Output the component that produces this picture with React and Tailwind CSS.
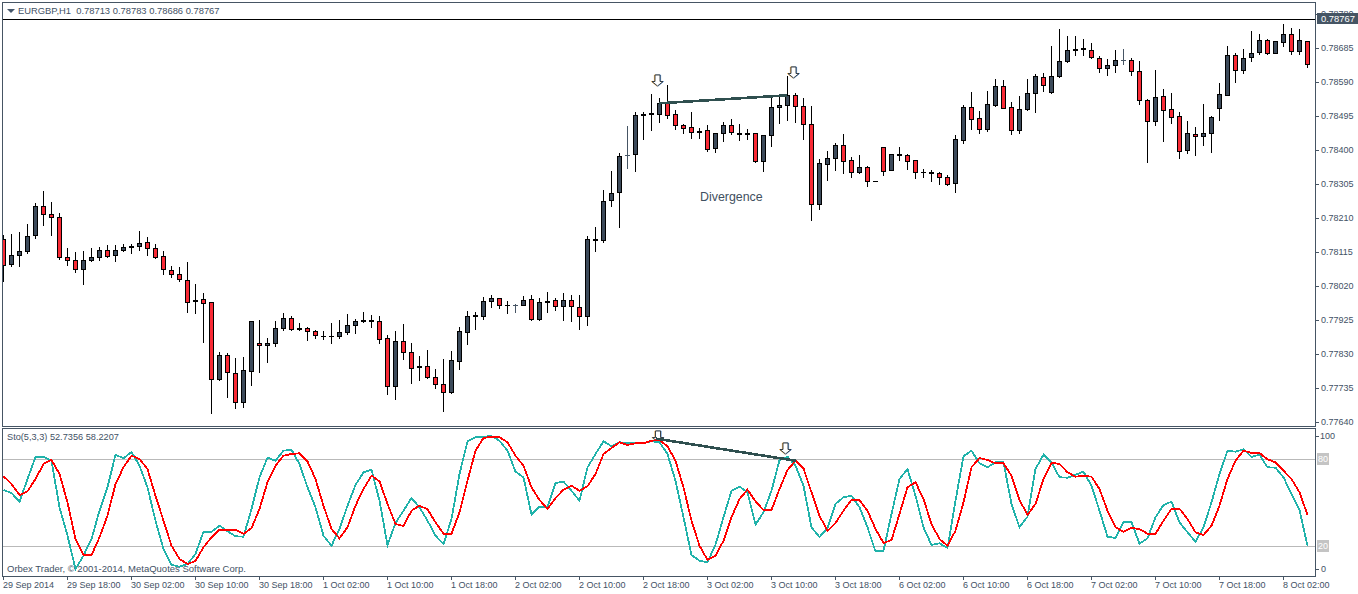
const FRAME = '#465564'

// candles read off the chart: [high, bodyTop, bodyBottom, low, colour], grouped by y offset, values are 3x
const groups = [
  [170, [
    [196,208,286,335,'r'],[192,256,284,290,'b'],[186,244,257,290,'b'],[162,199,245,251,'b'],[99,109,196,206,'b'],
    [63,109,133,167,'r'],[96,133,142,197,'r'],[129,142,263,269,'r'],[235,262,271,287,'r'],[246,271,298,308,'r'],
    [243,271,298,344,'b'],[235,262,271,275,'b'],[232,241,263,272,'b'],[226,241,260,263,'r'],[226,241,257,275,'b'],
    [223,232,241,245,'b'],[223,229,232,251,'b'],[183,220,229,242,'b'],[202,217,235,257,'r'],[223,235,263,266,'r'],
    [244,259,298,314,'r'],[289,301,313,323,'r'],[292,313,329,335,'r'],[277,331,397,428,'r'],[343,391,394,431,'b'],
    [370,388,400,518,'r'],[397,397,628,731,'r'],[547,556,628,631,'b'],[550,556,607,683,'r'],[565,610,697,716,'r'],
    [562,601,697,713,'b'],[454,454,604,647,'b'],[451,520,526,608,'r'],[505,520,527,578,'b'],[454,475,521,530,'b'],
    [430,445,475,482,'b'],[439,445,478,482,'r'],[460,475,478,482,'b'],[472,475,484,512,'r'],[481,484,496,506,'r'],
    [484,499,499,509,'k'],[460,499,499,521,'k'],[451,487,499,506,'b'],
  ]],
  [220, [
    [283,316,338,344,'b'],[298,304,316,341,'b'],[277,301,304,308,'b'],[286,301,304,323,'b'],[289,304,358,371,'r'],
    [346,355,499,524,'r'],[334,364,499,539,'b'],[313,364,397,419,'r'],[370,397,445,491,'r'],[408,439,442,482,'b'],
    [391,439,472,476,'r'],[448,472,493,506,'r'],[418,493,517,575,'r'],[394,421,517,521,'b'],[322,334,424,449,'b'],
    [274,289,337,374,'b'],[277,286,289,329,'b'],[232,244,289,299,'b'],[226,235,244,263,'b'],[235,235,256,266,'r'],
    [244,256,256,281,'k'],[253,256,256,277,'s'],[229,241,256,256,'b'],[226,238,298,302,'r'],[235,247,298,302,'b'],
    [217,244,247,278,'b'],[235,241,259,272,'r'],[220,241,259,302,'b'],[226,241,259,305,'r'],[226,262,289,329,'r'],
    [49,58,289,317,'b'],[22,58,61,95,'b'],
  ]],
  [60, [
    [391,424,542,548,'b'],[334,400,421,439,'b'],[280,289,397,503,'b'],[199,286,286,325,'s'],[157,166,283,335,'b'],
    [157,163,166,238,'b'],[103,160,163,212,'b'],[115,130,163,188,'b'],[75,130,166,176,'r'],[151,163,196,208,'r'],
    [193,196,205,220,'r'],[157,202,217,235,'r'],[205,214,217,235,'b'],[196,211,268,274,'r'],[220,220,265,277,'b'],
    [187,196,220,245,'b'],[178,196,217,223,'r'],[193,220,223,241,'b'],[208,220,223,238,'b'],[220,220,304,307,'r'],
    [226,226,304,335,'b'],[106,142,226,260,'b'],[110,136,142,190,'b'],[48,106,136,180,'b'],[100,106,139,186,'r'],
    [115,139,193,239,'r'],[139,193,433,482,'r'],[298,310,433,449,'b'],[274,295,313,362,'b'],[250,256,295,332,'b'],
    [223,256,304,340,'r'],[292,301,337,352,'r'],[286,322,337,341,'b'],[319,322,364,380,'r'],[364,364,364,364,'k'],
  ]],
  [20, [
    [382,382,454,467,'r'],[403,403,451,451,'b'],[382,403,406,421,'b'],[403,406,424,449,'r'],[421,421,457,476,'r'],
    [448,457,457,473,'k'],[451,457,460,485,'b'],[457,460,472,494,'r'],[466,472,493,497,'r'],[346,358,490,518,'b'],
    [256,262,361,371,'b'],[217,262,298,329,'r'],[274,295,328,341,'r'],[214,253,328,335,'b'],[178,199,256,260,'b'],
    [181,199,265,265,'r'],[247,262,331,344,'r'],[229,268,331,341,'b'],[178,220,268,272,'b'],[163,169,220,278,'b'],
    [160,172,196,215,'r'],[79,169,217,221,'b'],[28,124,169,173,'b'],[49,91,124,128,'b'],[49,88,91,107,'b'],
    [58,85,88,107,'b'],[70,91,112,116,'r'],[109,115,145,158,'r'],[118,136,145,167,'b'],[91,121,136,158,'b'],
    [88,121,121,134,'s'],[115,121,154,167,'r'],[124,154,241,254,'r'],[238,241,304,428,'r'],[151,232,304,317,'b'],
    [208,229,271,365,'r'],
  ]],
  [0, [
    [280,328,352,371,'r'],[337,349,454,476,'r'],[364,400,451,461,'b'],[381,403,409,467,'r'],[313,400,409,437,'b'],
    [349,352,400,458,'b'],[250,283,325,361,'b'],[139,166,286,286,'b'],[160,166,211,248,'r'],[148,175,211,221,'b'],
    [94,160,172,185,'b'],[103,121,157,163,'b'],[118,121,160,163,'r'],[124,124,160,160,'b'],[73,103,127,140,'b'],
    [85,103,154,163,'r'],[88,121,154,163,'b'],[124,124,193,203,'r'],
  ]],
]

const candles = groups.flatMap(([off, rows]) =>
  rows.map(([h, t, b, l, c]) => ({
    high: Math.floor(off + h / 3),
    top: Math.floor(off + t / 3),
    bottom: Math.floor(off + b / 3),
    low: Math.floor(off + l / 3),
    color: c,
  }))
)

const signal = [
  157,180,213,202,165,120,108,150,235,345,393,393,340,275,180,130,95,105,135,215,290,365,405,420,411,370,340,317,317,317,330,312,255,175,125,95,90,88,112,165,245,315,343,
  310,245,195,155,172,240,300,306,260,245,256,295,329,329,265,170,80,42,38,40,55,95,125,190,228,255,222,197,185,200,187,150,90,72,55,63,58,58,50,48,67,110,
  190,290,365,408,395,350,280,225,197,232,258,258,195,138,110,133,205,275,321,297,260,227,228,260,315,357,348,270,190,175,225,300,345,365,320,235,130,102,108,118,118,155,228,
  272,240,165,116,120,145,158,155,158,195,260,310,323,312,315,329,329,290,254,254,285,325,333,305,245,165,110,80,87,87,106,115,140,165,205,273,
]

const main = [
  198,207,233,165,99,99,110,250,335,435,395,345,260,190,92,103,84,125,190,290,375,422,428,420,390,323,323,305,322,337,338,255,160,101,110,80,77,120,190,250,335,365,315,
  245,183,145,137,230,363,297,260,222,250,290,335,360,285,150,52,40,38,36,50,80,143,160,272,248,248,177,173,200,230,130,90,52,67,55,57,57,57,52,55,90,170,
  280,393,410,415,362,280,200,188,205,302,265,200,108,98,125,185,310,339,312,240,220,215,250,310,382,380,270,165,135,215,310,363,358,372,230,97,80,118,130,115,115,240,310,
  278,135,92,115,160,161,152,143,185,260,338,342,294,294,359,343,280,243,233,295,325,353,310,235,150,80,83,76,99,92,130,131,160,210,258,365,
]

const prices = ['0.78780','0.78685','0.78590','0.78495','0.78400','0.78305','0.78210','0.78115','0.78020','0.77925','0.77830','0.77735','0.77640']

const dates = [
  '29 Sep 2014','29 Sep 18:00','30 Sep 02:00','30 Sep 10:00','30 Sep 18:00','1 Oct 02:00','1 Oct 10:00','1 Oct 18:00',
  '2 Oct 02:00','2 Oct 10:00','2 Oct 18:00','3 Oct 02:00','3 Oct 10:00','3 Oct 18:00','6 Oct 02:00','6 Oct 10:00',
  '6 Oct 18:00','7 Oct 02:00','7 Oct 10:00','7 Oct 18:00','8 Oct 02:00',
]

const barX = (i) => 3 + 8 * i
const toPoints = (vals) => vals.map((v, i) => `${barX(i) + 0.5},${(424 + v / 3).toFixed(1)}`).join(' ')

function Candle({ c, i }) {
  const x = barX(i)
  const ink = c.color === 's' ? FRAME : '#000'
  const thin = c.top === c.bottom
  return (
    <g shapeRendering="crispEdges">
      <rect x={x} y={c.high} width="1" height={Math.max(1, c.low - c.high + 1)} fill={ink} />
      {thin ? (
        <rect x={x - 2} y={c.top} width="5" height="1" fill={ink} />
      ) : (
        <rect
          x={x - 1.5}
          y={c.top + 0.5}
          width="4"
          height={c.bottom - c.top}
          fill={c.color === 'r' ? '#f92a35' : '#3c4a5a'}
          stroke="#000"
        />
      )}
    </g>
  )
}

function Arrow({ x, y }) {
  const d = `M${x - 2.5} ${y}h5v6.5h3l-5.5 4.5l-5.5-4.5h3z`
  return (
    <g fill="none">
      <path d={d} stroke="#e9a94c" strokeWidth="1" transform="translate(-0.6 0)" />
      <path d={d} stroke="#5b95d6" strokeWidth="1" transform="translate(0.6 0)" />
      <path d={d} stroke="#2b3138" strokeWidth="0.9" fill="#fff" />
    </g>
  )
}

function PriceRow({ label }) {
  return (
    <div className="flex h-[34px] shrink-0 items-center">
      <div className="h-px w-[3px] bg-[#465564]" />
      <span className="ml-[2px]">{label}</span>
    </div>
  )
}

export default function App() {
  return (
    <div
      className="relative h-[594px] w-[1358px] overflow-hidden bg-white text-[9px] leading-none text-[#3f5165]"
      style={{ fontFamily: '"Liberation Sans", Arial, sans-serif' }}
    >
      {/* price pane */}
      <div className="ml-[2px] mt-[2px] flex h-[425px]">
        <div className="relative h-[425px] w-[1314px] shrink-0 border border-[#465564]">
          <svg className="block h-[423px] w-[1312px]" viewBox="3 3 1312 423">
            {candles.map((c, i) => (
              <Candle key={i} c={c} i={i} />
            ))}
            <rect x="3" y="19" width="1312" height="1" fill="#000" shapeRendering="crispEdges" />
            <line x1="659" y1="103.3" x2="787" y2="95.3" stroke="#2f4f4f" strokeWidth="2.6" shapeRendering="crispEdges" />
            <Arrow x={657.5} y={75} />
            <Arrow x={793.5} y={67} />
          </svg>
          <div className="absolute left-[4px] top-[3px] flex h-[10px] items-center text-[9.4px]">
            <svg width="8" height="4" viewBox="0 0 8 4" className="mr-[3px]">
              <path d="M0 0h8l-4 4z" fill="#44566a" />
            </svg>
            <span className="whitespace-pre">EURGBP,H1  0.78713 0.78783 0.78686 0.78767</span>
          </div>
          <div className="absolute left-[697px] top-[187px] text-[12.4px] leading-[14px] text-[#3f5060]">Divergence</div>
        </div>
        <div className="relative min-w-0 flex-1">
          <div className="-mt-[5px] flex flex-col">
            {prices.map((p) => (
              <PriceRow key={p} label={p} />
            ))}
          </div>
          <div className="absolute left-px right-0 top-[11px] flex h-[11px] items-center bg-[#465564] pl-[4px] text-[9.4px] text-white">
            0.78767
          </div>
        </div>
      </div>

      {/* stochastic pane */}
      <div className="ml-[2px] mt-px flex h-[149px]">
        <div className="relative h-[149px] w-[1314px] shrink-0 border border-[#465564]">
          <svg className="block h-[147px] w-[1312px]" viewBox="3 429 1312 147">
            <rect x="3" y="459" width="1312" height="1" fill="#b9b9b9" shapeRendering="crispEdges" />
            <rect x="3" y="546" width="1312" height="1" fill="#b9b9b9" shapeRendering="crispEdges" />
            <Arrow x={658} y={431} />
            <Arrow x={785.5} y={443} />
            <polyline points={toPoints(main)} fill="none" stroke="#20b2aa" strokeWidth="1.8" shapeRendering="crispEdges" />
            <polyline points={toPoints(signal)} fill="none" stroke="#ff0000" strokeWidth="1.8" shapeRendering="crispEdges" />
            <line x1="656" y1="438.6" x2="796" y2="460.8" stroke="#2f4f4f" strokeWidth="2.6" shapeRendering="crispEdges" />
          </svg>
          <div className="absolute left-[4px] top-[4px] whitespace-pre text-[9.2px]">Sto(5,3,3) 52.7356 58.2207</div>
          <div className="absolute bottom-[3px] left-[4px] whitespace-pre text-[9.5px]">Orbex Trader, © 2001-2014, MetaQuotes Software Corp.</div>
        </div>
        <div className="flex min-w-0 flex-1 flex-col">
          <div className="mt-px flex h-[14px] items-center">
            <div className="h-px w-[3px] bg-[#465564]" />
            <span className="ml-px">100</span>
          </div>
          <div className="ml-px mt-[10px] flex h-[12px] w-[12px] items-center justify-center bg-[#c4c4c4] text-white">80</div>
          <div className="ml-px mt-[75px] flex h-[12px] w-[12px] items-center justify-center bg-[#c4c4c4] text-white">20</div>
          <div className="mt-[10px] flex h-[14px] items-center">
            <div className="h-px w-[3px] bg-[#465564]" />
            <span className="ml-[2px]">0</span>
          </div>
        </div>
      </div>

      {/* time axis */}
      <div className="ml-[3px] flex">
        {dates.map((d) => (
          <div key={d} className="w-[64px] shrink-0">
            <div className="h-[3px] w-px bg-[#465564]" />
            <div className="mt-px whitespace-nowrap">{d}</div>
          </div>
        ))}
      </div>
    </div>
  )
}
